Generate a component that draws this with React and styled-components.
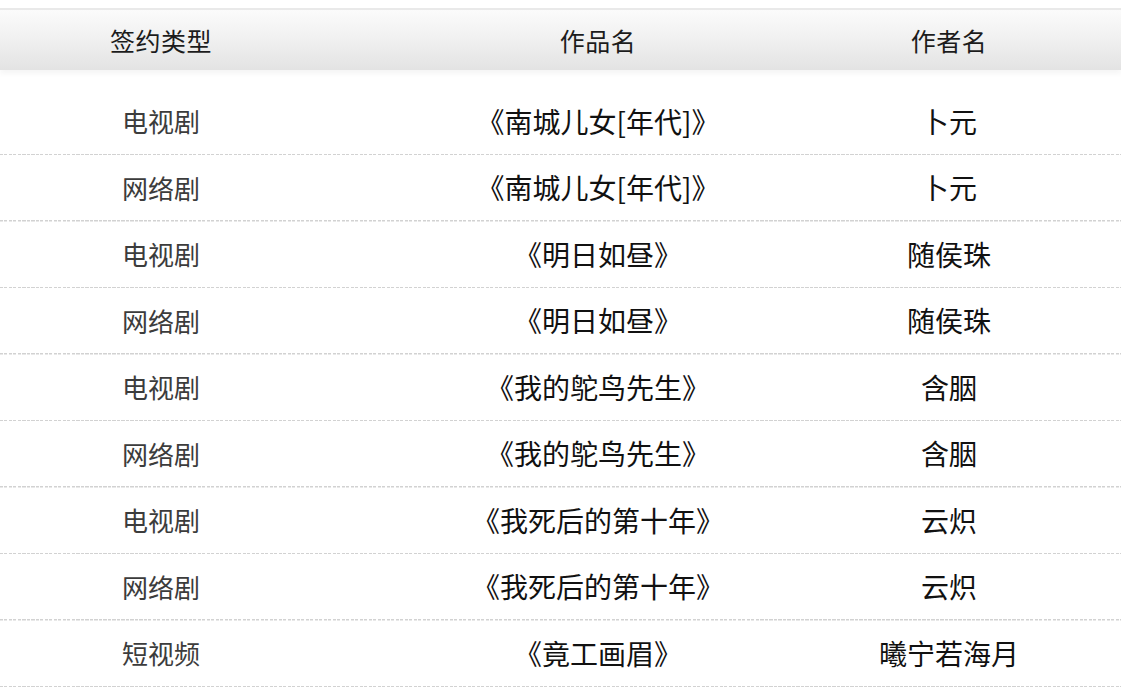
import styled, { createGlobalStyle } from "styled-components";

const GlobalStyle = createGlobalStyle`
  html, body {
    margin: 0;
    padding: 0;
    background: #fff;
    font-family: "Noto Sans CJK SC", "Noto Sans", sans-serif;
  }
`;

const Page = styled.div`
  width: 1121px;
  height: 696px;
  overflow: hidden;
  background: #fff;
  padding-top: 8px;
  box-sizing: border-box;
`;

const columns = "322px 552px 150px 1fr";

const HeaderRow = styled.div`
  display: grid;
  grid-template-columns: ${columns};
  align-items: center;
  height: 62px;
  border-top: 2px solid #e9e9e9;
  box-sizing: border-box;
  background: linear-gradient(to bottom, #fbfbfb 0%, #f1f1f1 45%, #e3e3e3 100%);
  box-shadow: 0 4px 5px rgba(0, 0, 0, 0.04);
`;

const HeadCell = styled.div`
  text-align: center;
  font-size: 25px;
  color: #1c1c1c;
  letter-spacing: 0.5px;
`;

const Body = styled.div`
  padding-top: 18.5px;
`;

const Row = styled.div`
  display: grid;
  grid-template-columns: ${columns};
  align-items: center;
  height: 66.5px;
  box-sizing: border-box;
  padding-bottom: 2px;
  background-image: repeating-linear-gradient(
    to right,
    #d2d2d2 0,
    #d2d2d2 3px,
    transparent 3px,
    transparent 4.5px
  );
  background-size: 100% 1.5px;
  background-repeat: no-repeat;
  background-position: bottom left;
`;

const Cell = styled.div`
  text-align: center;
  font-size: ${(p) => (p.$muted ? "26px" : "28px")};
  color: ${(p) => (p.$muted ? "#3c3c3c" : "#111")};
  white-space: nowrap;
`;

const rows = [
  ["电视剧", "《南城儿女[年代]》", "卜元"],
  ["网络剧", "《南城儿女[年代]》", "卜元"],
  ["电视剧", "《明日如昼》", "随侯珠"],
  ["网络剧", "《明日如昼》", "随侯珠"],
  ["电视剧", "《我的鸵鸟先生》", "含胭"],
  ["网络剧", "《我的鸵鸟先生》", "含胭"],
  ["电视剧", "《我死后的第十年》", "云炽"],
  ["网络剧", "《我死后的第十年》", "云炽"],
  ["短视频", "《竟工画眉》", "曦宁若海月"],
];

export default function App() {
  return (
    <Page>
      <GlobalStyle />
      <HeaderRow>
        <HeadCell>签约类型</HeadCell>
        <HeadCell>作品名</HeadCell>
        <HeadCell>作者名</HeadCell>
      </HeaderRow>
      <Body>
        {rows.map(([type, title, author], i) => (
          <Row key={i}>
            <Cell $muted>{type}</Cell>
            <Cell>{title}</Cell>
            <Cell>{author}</Cell>
          </Row>
        ))}
      </Body>
    </Page>
  );
}
